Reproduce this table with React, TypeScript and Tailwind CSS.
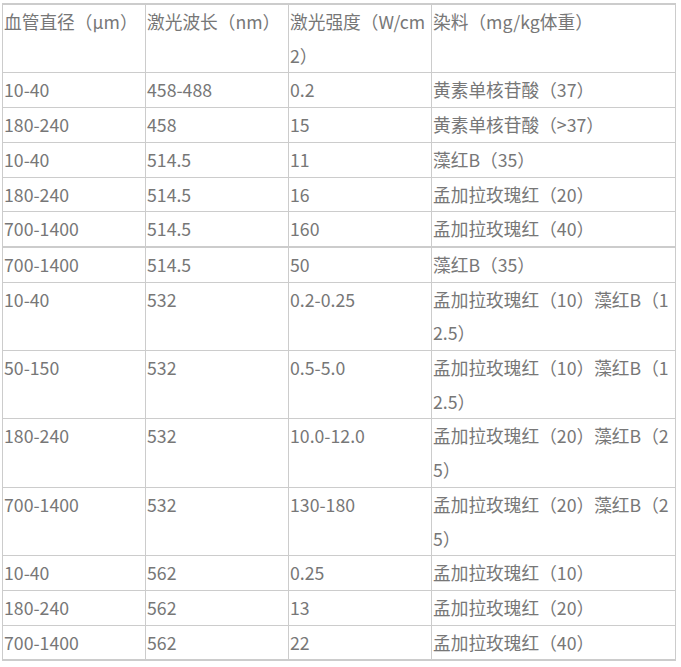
import React from "react";

const rows: [string, string, string, string][] = [
  ["10-40", "458-488", "0.2", "黄素单核苷酸（37）"],
  ["180-240", "458", "15", "黄素单核苷酸（>37）"],
  ["10-40", "514.5", "11", "藻红B（35）"],
  ["180-240", "514.5", "16", "孟加拉玫瑰红（20）"],
  ["700-1400", "514.5", "160", "孟加拉玫瑰红（40）"],
  ["700-1400", "514.5", "50", "藻红B（35）"],
  ["10-40", "532", "0.2-0.25", "孟加拉玫瑰红（10）藻红B（12.5）"],
  ["50-150", "532", "0.5-5.0", "孟加拉玫瑰红（10）藻红B（12.5）"],
  ["180-240", "532", "10.0-12.0", "孟加拉玫瑰红（20）藻红B（25）"],
  ["700-1400", "532", "130-180", "孟加拉玫瑰红（20）藻红B（25）"],
  ["10-40", "562", "0.25", "孟加拉玫瑰红（10）"],
  ["180-240", "562", "13", "孟加拉玫瑰红（20）"],
  ["700-1400", "562", "22", "孟加拉玫瑰红（40）"],
];

const cell =
  "border border-[#cccccc] px-[1px] py-0 align-top text-left font-normal break-all";

export default function App() {
  return (
    <div
      className="bg-white w-[681px] h-[667px] pt-[3px] pl-[2px] text-[#777777] text-[17.7px] leading-[33.7px]"
      style={{ fontFamily: '"Noto Sans CJK SC", "Noto Sans", sans-serif' }}
    >
      <table className="table-fixed border-collapse w-[673px] border-y-2 border-x border-[#cccccc]">
        <colgroup>
          <col className="w-[143px]" />
          <col className="w-[143px]" />
          <col className="w-[143px]" />
          <col className="w-[244px]" />
        </colgroup>
        <thead>
          <tr>
            <th className={cell}>血管直径（μm）</th>
            <th className={cell}>激光波长（nm）</th>
            <th className={cell}>激光强度（W/cm 2）</th>
            <th className={cell}>染料（mg/kg体重）</th>
          </tr>
        </thead>
        <tbody>
          {rows.map((r, i) => (
            <tr key={i}>
              {r.map((c, j) => (
                <td key={j} className={cell + (i === 5 ? " border-t-2" : "")}>
                  {c}
                </td>
              ))}
            </tr>
          ))}
        </tbody>
      </table>
    </div>
  );
}
